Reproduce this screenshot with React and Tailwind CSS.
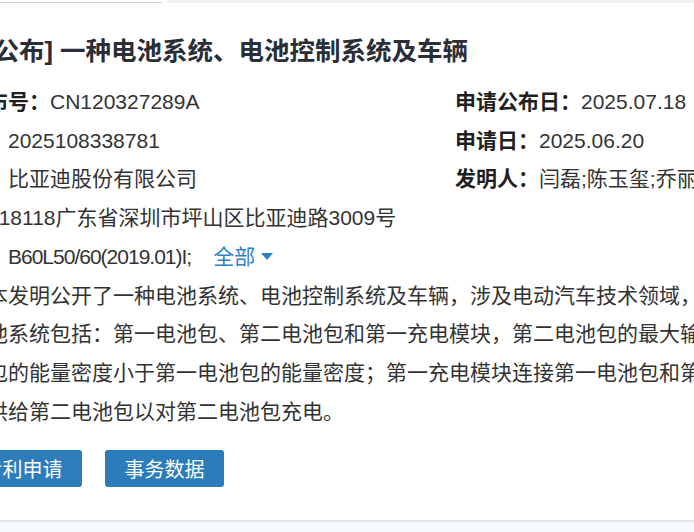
import { useState } from 'react';

const infoRows = [
  { left: ['申请公布号：', 'CN120327289A'], right: ['申请公布日：', '2025.07.18'] },
  { left: ['申请号：', '2025108338781'], right: ['申请日：', '2025.06.20'] },
  { left: ['申请人：', '比亚迪股份有限公司'], right: ['发明人：', '闫磊;陈玉玺;乔丽'] },
];

// continuation lines of the abstract, each with its own start offset
const abstractLines = [
  { text: '电池系统包括：第一电池包、第二电池包和第一充电模块，第二电池包的最大输出功率', indent: 'ml-[42px]' },
  { text: '电池包的能量密度小于第一电池包的能量密度；第一充电模块连接第一电池包和第二电池包', indent: 'ml-[21px]' },
  { text: '电能提供给第二电池包以对第二电池包充电。', indent: 'ml-0' },
];

export default function App() {
  const [active, setActive] = useState('事务数据');

  return (
    <div className="w-[694px] h-[532px] overflow-hidden bg-white flex flex-col font-['Liberation_Sans','Noto_Sans_CJK_SC',sans-serif]">
      {/* top strip */}
      <div className="flex h-[3px] shrink-0">
        <div className="w-[162px] border-b border-[#d4d4d4]" />
        <div className="w-[5px]" />
        <div className="flex-1 bg-[#eef2f7]" />
      </div>

      <div className="-ml-[76px] w-[1100px] pt-[30px]">
        {/* Title */}
        <h1 className="ml-[10px] text-[25.5px] leading-[36px] font-bold text-[#2a2e36] whitespace-nowrap">
          [发明公布] 一种电池系统、电池控制系统及车辆
        </h1>

        {/* Info */}
        <div className="mt-[14px] text-[21px] leading-[38.7px] text-[#333]">
          {infoRows.map((row, i) => (
            <div key={i} className="flex whitespace-nowrap">
              <div className="w-[531px] shrink-0">
                <span className="font-bold text-[#1f1f1f]">{row.left[0]}</span>
                {row.left[1]}
              </div>
              <div>
                <span className="font-bold text-[#1f1f1f]">{row.right[0]}</span>
                {row.right[1]}
              </div>
            </div>
          ))}
          <div className="whitespace-nowrap">
            <span className="font-bold text-[#1f1f1f]">地址：</span>
            518118广东省深圳市坪山区比亚迪路3009号
          </div>
          <div className="flex items-center whitespace-nowrap">
            <span className="font-bold text-[#1f1f1f]">分类号：</span>
            <span className="tracking-[-1px]">B60L50/60(2019.01)I;</span>
            <button className="ml-[22px] flex items-center gap-[6px] text-[#2f80c7]">
              全部
              <svg width="12" height="8" viewBox="0 0 12 8">
                <path d="M0 0 L12 0 L6 7 Z" fill="#2f80c7" />
              </svg>
            </button>
          </div>

          {/* Abstract */}
          <div className="whitespace-nowrap">
            <span className="font-bold text-[#1f1f1f]">摘要：</span>
            本发明公开了一种电池系统、电池控制系统及车辆，涉及电动汽车技术领域，
          </div>
          {abstractLines.map((line, i) => (
            <div key={i} className={`whitespace-nowrap ${line.indent}`}>
              {line.text}
            </div>
          ))}
        </div>

        {/* Buttons */}
        <div className="mt-[19px] ml-[39px] flex gap-[23px]">
          {['专利申请', '事务数据'].map((label) => (
            <button
              key={label}
              onClick={() => setActive(label)}
              className={`w-[119px] h-[37px] rounded-[3px] text-[20px] text-white font-['Noto_Sans_CJK_SC',sans-serif] ${
                active === label ? 'bg-[#2b7cba]' : 'bg-[#2d7dbb]'
              }`}
            >
              {label}
            </button>
          ))}
        </div>
      </div>

      {/* bottom divider */}
      <div className="mt-auto h-[2px] shrink-0 bg-[#dfe6ec]" />
      <div className="h-[10px] shrink-0 bg-[#f7fafd]" />
    </div>
  );
}
